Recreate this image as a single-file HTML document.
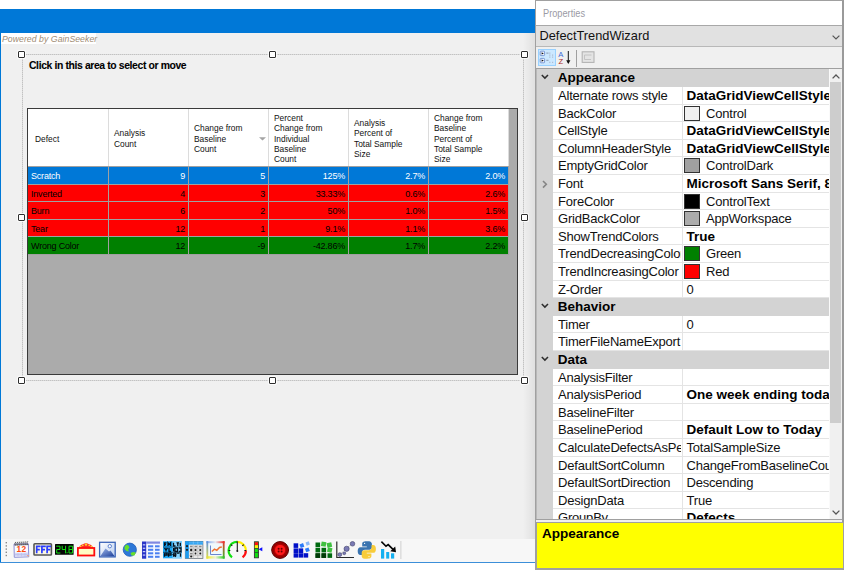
<!DOCTYPE html>
<html><head><meta charset="utf-8">
<style>
*{box-sizing:border-box;margin:0;padding:0}
html,body{width:844px;height:570px;overflow:hidden;background:#fff;font-family:"Liberation Sans",sans-serif;position:relative}
.abs{position:absolute}
#form{position:absolute;left:0;top:9px;width:536px;height:554px;background:#f0f0f0;border-left:1px solid #0078d7}
#titlebar{position:absolute;left:0;top:9px;width:536px;height:24px;background:#0078d7}
#botline{position:absolute;left:0;top:562px;width:536px;height:1px;background:#3c8fd9}
#powered{position:absolute;left:1px;top:33px;width:95px;height:11px;background:#fff;color:#a08c74;font-style:italic;font-size:8.7px;line-height:13.6px;padding-left:1px;letter-spacing:0.05px;white-space:nowrap}
.dash{position:absolute;background:transparent}
.hd{position:absolute;width:7px;height:7px;border:1.5px solid #2e2e2e;background:#fff;border-radius:1px;box-shadow:0 0 0 1px rgba(255,255,255,.8)}
#click{position:absolute;left:29px;top:60.3px;font-size:10.4px;letter-spacing:-0.38px;font-weight:bold;color:#000;white-space:nowrap;line-height:12px;-webkit-text-stroke:0.08px #000}
#grid{position:absolute;left:27px;top:108px;width:491px;height:267px;border:1px solid #3a3a3a;background:#ababab;overflow:hidden}
#hdr{position:absolute;left:0;top:0;width:481px;height:58px;background:#fff;border-bottom:1px solid #a0a0a0}
.hc{position:absolute;top:0;height:57px;border-right:1px solid #dcdcdc;display:flex;align-items:center}
.ht{font-size:8.4px;line-height:10.4px;color:#111;padding-left:6px;padding-top:2.6px;white-space:nowrap}
.dr{position:absolute;left:0;width:481px;border-bottom:1px solid #a0a0a0}
.dc{position:absolute;top:0;height:100%;border-right:1px solid #a0a0a0;font-size:9px;letter-spacing:-0.2px;line-height:16.6px;padding:1px 3px 0 3px;white-space:nowrap;overflow:hidden}
.sel{background:#0078d7;color:#fff}
.red{background:#ff0000;color:#000}
.grn{background:#008000;color:#000}
/* toolbar */
#tb{position:absolute;left:1px;top:539px;width:534px;height:23px;background:#f7f7f7}
#grip{position:absolute;left:6px;top:542px;width:2px;height:16px;background:repeating-linear-gradient(#9a9a9a 0 1px,transparent 1px 3px)}
.ic{position:absolute;top:541px;width:18px;height:18px}
/* properties panel */
#pp{position:absolute;left:535px;top:0;width:309px;height:570px;background:#f0f0f0;border:1px solid #a0a0a0;border-right:2px solid #9a9a9a}
#pptitle{position:absolute;left:536px;top:1px;width:306px;height:25px;background:#fff;border-bottom:1px solid #a8a8a8}
#pptitle span{position:absolute;left:6.7px;top:4.8px;font-size:10.6px;color:#9a9aa4;line-height:14px;transform:scaleX(0.87);transform-origin:0 0;white-space:nowrap}
#combo{position:absolute;left:536px;top:26px;width:306px;height:21px;background:#e1e1e1;border-bottom:1px solid #b8b8b8}
#combo span{position:absolute;left:3.5px;top:2px;font-size:12.8px;line-height:16px;color:#111;white-space:nowrap}
#ptb{position:absolute;left:536px;top:47px;width:306px;height:22px;background:#f0f0f0;border-bottom:1px solid #a0a0a0}
#pgrid{position:absolute;left:536px;top:69px;width:293px;height:450px;background:#d3d3d3;overflow:hidden}
.cat{position:absolute;left:0;width:293px;background:#d3d3d3}
.cat .chev{position:absolute;left:4.6px;top:5.4px;line-height:0}
.cat .ct{position:absolute;left:21.7px;top:0;font-size:13.5px;font-weight:bold;line-height:18px;color:#000;white-space:nowrap}
.pr{position:absolute;left:0;width:293px}
.pr .exp{position:absolute;left:5.6px;top:4.5px;line-height:0}
.lab{position:absolute;left:17px;top:0;width:129px;background:#fff;border-bottom:1px solid #e4e4e4;font-size:13px;letter-spacing:-0.2px;line-height:18px;padding-left:5px;color:#111;white-space:nowrap}
.lt{display:block;width:122.6px;overflow:hidden}
.val{position:absolute;left:146px;top:0;width:147px;background:#fff;border-bottom:1px solid #e4e4e4;border-left:1px solid #e4e4e4;white-space:nowrap;overflow:hidden}
.vb{position:absolute;left:3.5px;top:0;font-size:13.5px;font-weight:bold;line-height:18px;color:#000}
.vt{position:absolute;left:3.5px;top:0;font-size:13px;letter-spacing:-0.2px;line-height:18px;color:#111}
.sw{position:absolute;left:0.8px;top:1.2px;width:16px;height:14.7px;border:1px solid #333}
#vsb{position:absolute;left:829px;top:69px;width:13px;height:450px;background:#f0f0f0;border-left:1px solid #fafafa}
#thumb{position:absolute;left:830px;top:82px;width:11px;height:341px;background:#cdcdcd}
#pgbot{position:absolute;left:536px;top:519px;width:306px;height:3px;background:#f0f0f0;border-top:1px solid #a0a0a0}
#help{position:absolute;left:536px;top:522px;width:308px;height:47px;background:#ffff00;border:1px solid #a0a0a0}
#help span{position:absolute;left:5px;top:3px;font-size:13.5px;font-weight:bold;line-height:16px;color:#000}
</style></head><body>
<div id="form"></div>
<div id="titlebar"></div>
<div id="botline"></div>
<div style="position:absolute;left:523px;top:33px;width:12px;height:529px;background:linear-gradient(90deg,rgba(0,0,0,0) 0,rgba(0,0,0,0.065) 100%)"></div>
<div id="powered">Powered by GainSeeker</div>

<!-- selection rectangle -->
<div class="dash" style="left:21.5px;top:54px;width:502px;height:1px;background:repeating-linear-gradient(90deg,#c2c2c2 0 1px,#dadada 1px 2px)"></div>
<div class="dash" style="left:21.5px;top:380px;width:502px;height:1px;background:repeating-linear-gradient(90deg,#c2c2c2 0 1px,#dadada 1px 2px)"></div>
<div class="dash" style="left:21.5px;top:54px;width:1px;height:326px;background:repeating-linear-gradient(#c2c2c2 0 1px,#dadada 1px 2px)"></div>
<div class="dash" style="left:523px;top:54px;width:1px;height:326px;background:repeating-linear-gradient(#c2c2c2 0 1px,#dadada 1px 2px)"></div>

<div id="click">Click in this area to select or move</div>

<div id="grid">
<div id="hdr"><div class="hc" style="left:0px;width:81px"><div class="ht" style="padding-left:7px">Defect</div></div>
<div class="hc" style="left:81px;width:80px"><div class="ht" style="padding-left:5px">Analysis<br>Count</div></div>
<div class="hc" style="left:161px;width:80px"><div class="ht" style="padding-left:5px">Change from<br>Baseline<br>Count</div></div>
<div class="hc" style="left:241px;width:80px"><div class="ht" style="padding-left:5px">Percent<br>Change from<br>Individual<br>Baseline<br>Count</div></div>
<div class="hc" style="left:321px;width:80px"><div class="ht" style="padding-left:5px">Analysis<br>Percent of<br>Total Sample<br>Size</div></div>
<div class="hc" style="left:401px;width:80px"><div class="ht" style="padding-left:5px">Change from<br>Baseline<br>Percent of<br>Total Sample<br>Size</div></div>
<svg style="position:absolute;left:230.8px;top:28px" width="7" height="4" viewBox="0 0 7 4"><path d="M0 0.2 L7 0.2 L3.5 3.6 Z" fill="#a4a4a4"/></svg>
</div>
<div class="dr sel" style="top:58px;height:18px"><div class="dc" style="left:0px;width:81px;text-align:left">Scratch</div><div class="dc" style="left:81px;width:80px;text-align:right">9</div><div class="dc" style="left:161px;width:80px;text-align:right">5</div><div class="dc" style="left:241px;width:80px;text-align:right">125%</div><div class="dc" style="left:321px;width:80px;text-align:right">2.7%</div><div class="dc" style="left:401px;width:80px;text-align:right">2.0%</div></div>
<div class="dr red" style="top:76px;height:17px"><div class="dc" style="left:0px;width:81px;text-align:left">Inverted</div><div class="dc" style="left:81px;width:80px;text-align:right">4</div><div class="dc" style="left:161px;width:80px;text-align:right">3</div><div class="dc" style="left:241px;width:80px;text-align:right">33.33%</div><div class="dc" style="left:321px;width:80px;text-align:right">0.6%</div><div class="dc" style="left:401px;width:80px;text-align:right">2.6%</div></div>
<div class="dr red" style="top:93px;height:18px"><div class="dc" style="left:0px;width:81px;text-align:left">Burn</div><div class="dc" style="left:81px;width:80px;text-align:right">6</div><div class="dc" style="left:161px;width:80px;text-align:right">2</div><div class="dc" style="left:241px;width:80px;text-align:right">50%</div><div class="dc" style="left:321px;width:80px;text-align:right">1.0%</div><div class="dc" style="left:401px;width:80px;text-align:right">1.5%</div></div>
<div class="dr red" style="top:111px;height:17px"><div class="dc" style="left:0px;width:81px;text-align:left">Tear</div><div class="dc" style="left:81px;width:80px;text-align:right">12</div><div class="dc" style="left:161px;width:80px;text-align:right">1</div><div class="dc" style="left:241px;width:80px;text-align:right">9.1%</div><div class="dc" style="left:321px;width:80px;text-align:right">1.1%</div><div class="dc" style="left:401px;width:80px;text-align:right">3.6%</div></div>
<div class="dr grn" style="top:128px;height:18px"><div class="dc" style="left:0px;width:81px;text-align:left">Wrong Color</div><div class="dc" style="left:81px;width:80px;text-align:right">12</div><div class="dc" style="left:161px;width:80px;text-align:right">-9</div><div class="dc" style="left:241px;width:80px;text-align:right">-42.86%</div><div class="dc" style="left:321px;width:80px;text-align:right">1.7%</div><div class="dc" style="left:401px;width:80px;text-align:right">2.2%</div></div>
</div>

<div class="hd" style="left:18px;top:51px"></div>
<div class="hd" style="left:269px;top:51px"></div>
<div class="hd" style="left:520.5px;top:51px"></div>
<div class="hd" style="left:18px;top:214px"></div>
<div class="hd" style="left:520.5px;top:214px"></div>
<div class="hd" style="left:18px;top:377px"></div>
<div class="hd" style="left:269px;top:377px"></div>
<div class="hd" style="left:520.5px;top:377px"></div>

<!-- bottom toolbar -->
<div id="tb"></div>
<svg style="position:absolute;left:0;top:0" width="410" height="570" viewBox="0 0 410 570">
<defs>
 <linearGradient id="gimg" x1="0" y1="0" x2="1" y2="1"><stop offset="0" stop-color="#ffffff"/><stop offset="1" stop-color="#b8cdf0"/></linearGradient>
 <linearGradient id="gmtn" x1="0" y1="0" x2="1" y2="1"><stop offset="0" stop-color="#9fb8ea"/><stop offset="1" stop-color="#1d3f99"/></linearGradient>
 <linearGradient id="gchart" x1="0" y1="0" x2="1" y2="1"><stop offset="0" stop-color="#5a8ee0"/><stop offset="0.45" stop-color="#f05050"/><stop offset="0.55" stop-color="#e8e040"/><stop offset="1" stop-color="#40c040"/></linearGradient>
</defs>
<!-- grip -->
<g fill="#8a8a8a"><rect x="5.6" y="542" width="1.4" height="1.4"/><rect x="5.6" y="545.2" width="1.4" height="1.4"/><rect x="5.6" y="548.4" width="1.4" height="1.4"/><rect x="5.6" y="551.6" width="1.4" height="1.4"/><rect x="5.6" y="554.8" width="1.4" height="1.4"/></g>
<!-- calendar -->
<path d="M14 544.2 L28.3 543.8 L28.8 556.8 L14.3 557.3 Z" fill="#fbfbff" stroke="#8c8ed6" stroke-width="1"/>
<path d="M14.8 552.8 L28 552.5 L28.3 556.3 L15 556.6 Z" fill="#d4d6f4"/>
<path d="M15 554.5 H28 M18 553 V556.5 M21.5 553 V556.5 M25 553 V556.5" stroke="#b8bce8" stroke-width="0.6"/>
<path d="M26.6 555 L28.6 555 L28.6 557 Z" fill="#f0a070"/>
<g stroke="#3a3a3a" stroke-width="0.8" fill="none">
<path d="M15.3 545.5 q-0.9 -2.6 0.5 -3.6 M17.3 545.4 q-0.9 -2.6 0.5 -3.6 M19.3 545.3 q-0.9 -2.6 0.5 -3.6 M21.3 545.2 q-0.9 -2.6 0.5 -3.6 M23.3 545.1 q-0.9 -2.6 0.5 -3.6 M25.3 545 q-0.9 -2.6 0.5 -3.6 M27.3 544.9 q-0.9 -2.6 0.5 -3.6"/>
</g>
<path d="M14.5 545 L28.3 544.6" stroke="#555" stroke-width="0.8"/>
<text x="16.6" y="552.4" font-family="Liberation Sans" font-weight="bold" font-size="8.4" fill="#ff4a10" letter-spacing="0.2">12</text>
<!-- FFF -->
<rect x="34" y="543.7" width="17.4" height="11.3" rx="0.8" fill="#fbf8e0" stroke="#555" stroke-width="1.6"/>
<g stroke="#2a3cff" stroke-width="1.7" fill="none"><path d="M36.7 553.3 V546.3 H40.6 M36.7 549.6 H39.8"/><path d="M41.9 553.3 V546.3 H45.8 M41.9 549.6 H45"/><path d="M47.1 553.3 V546.3 H51 M47.1 549.6 H50.2"/></g>
<!-- 24.8 -->
<rect x="55" y="544" width="18.6" height="10.7" rx="0.5" fill="#050505"/>
<g fill="none" stroke="#12e012" stroke-width="1" stroke-linecap="butt">
<path d="M56.2 546.2 H60 V549.5 H56.7 V553 H60.4"/>
<path d="M62.2 545.8 V549.5 H65.6 M65.6 545.8 V553.3"/>
<path d="M69 546.2 H72.6 V553 H69 Z M69 549.5 H72.6"/>
</g>
<rect x="66.6" y="552.2" width="1" height="1" fill="#12e012"/>
<!-- marquee -->
<path d="M78.5 547.8 Q80.5 544.5 84 543.8 Q86 542.4 88 543.8 Q91.5 544.5 93.5 547.8 Z" fill="#ff2a2a"/>
<g fill="#ffd030"><circle cx="80.6" cy="546.5" r="0.9"/><circle cx="82.8" cy="545.3" r="0.9"/><circle cx="86" cy="544.5" r="1.2"/><circle cx="89.2" cy="545.3" r="0.9"/><circle cx="91.4" cy="546.5" r="0.9"/></g>
<rect x="77.9" y="548" width="16.4" height="7.5" fill="#fffcc4" stroke="#ff0c0c" stroke-width="1.8"/>
<!-- image -->
<rect x="99.6" y="542.3" width="15.6" height="14.6" fill="url(#gimg)" stroke="#3a63b8" stroke-width="1.3"/>
<path d="M100.3 556.3 L105.5 548.5 L109 551.5 L110.5 550.5 L114.6 556.3 Z" fill="url(#gmtn)"/>
<circle cx="109.8" cy="546.2" r="1.7" fill="#fff" stroke="#5a80d0" stroke-width="1"/>
<!-- globe -->
<circle cx="129.8" cy="549.7" r="6.6" fill="#2d78d8" stroke="#1e5cb8" stroke-width="0.8"/>
<path d="M124.6 546.5 L126.5 544.5 L128.5 545.5 L129.5 547.5 L128 549.5 L129 551.5 L126.5 551 L124.5 549 Z" fill="#66e02a"/>
<path d="M130.5 553 L133 552 L135.8 552.5 L134.5 555.5 L131.5 555.5 Z" fill="#66e02a"/>
<!-- table -->
<rect x="142" y="541.5" width="18" height="17.2" fill="#f4f7ff"/>
<rect x="142" y="541.5" width="4.2" height="17.2" fill="#2a35c8"/>
<rect x="146.2" y="541.5" width="13.8" height="2.2" fill="#8088e0"/>
<g fill="#d8dcff"><rect x="142.8" y="544.3" width="2.5" height="1.1"/><rect x="142.8" y="547.7" width="2.5" height="1.1"/><rect x="142.8" y="551.1" width="2.5" height="1.1"/><rect x="142.8" y="554.5" width="2.5" height="1.1"/></g>
<g fill="#4a7ff0"><rect x="148" y="545.3" width="5.2" height="2"/><rect x="155" y="545.3" width="4.6" height="2"/><rect x="148" y="548.8" width="5.2" height="2"/><rect x="155" y="548.8" width="4.6" height="2"/><rect x="148" y="552.3" width="5.2" height="2"/><rect x="155" y="552.3" width="4.6" height="2"/><rect x="148" y="555.8" width="5.2" height="2"/><rect x="155" y="555.8" width="4.6" height="2"/></g>
<!-- cyan grid -->
<rect x="163" y="541.3" width="18.8" height="17" fill="#18a8f8"/>
<rect x="172.5" y="541.3" width="9.3" height="17" fill="#88d4ff"/>
<g stroke="#05101a" stroke-width="1.3" fill="none">
<path d="M164.5 546 V542.8 H166.5 M164.5 544.5 H166 M168 546 V542.8 L169.3 544.5 L170.6 542.8 V546"/>
<path d="M173.5 542.8 V546 H175.5 M176.5 542.8 H179 M177.8 542.8 V546 M180.3 542.8 V546"/>
<path d="M164.5 548 L166 550 L167.5 548 M166 550 V551.5 M169 548 V551.5 H171"/>
<path d="M173.6 548 V551.5 M175 548 H177.5 V551.5 H175 Z M178.8 548 H181 V551.5 H178.8"/>
<path d="M164.5 553.2 V556.8 M164.5 553.2 H167 V555 H164.5 M168.5 553.2 V556.8 M168.5 553.2 H171 V555 H168.5"/>
<path d="M173.6 553.2 V556.8 M173.6 553.2 H175.8 V555 H173.6 L176 556.8 M177 553.2 H179.5 M180.5 553.2 V556.8"/>
</g>
<path d="M163 547 H181.8 M163 552.3 H181.8" stroke="#08304a" stroke-width="0.7"/>
<!-- grid blue header -->
<rect x="185.3" y="541.4" width="17.6" height="17" fill="#e8e8e8" stroke="#707880" stroke-width="0.8"/>
<rect x="185.3" y="541.4" width="17.6" height="3.2" fill="#1d9cf0"/>
<rect x="185.3" y="541.4" width="3.6" height="17" fill="#1d9cf0"/>
<path d="M189 542.9 H203 M193.3 541.4 V544.6 M197.8 541.4 V544.6" stroke="#8ccaf8" stroke-width="0.6"/>
<path d="M189 548.2 H203 M189 551.8 H203 M189 555.3 H203 M193.3 544.6 V558.4 M197.8 544.6 V558.4" stroke="#b0b0b0" stroke-width="0.6"/>
<g fill="#1a1a1a"><circle cx="187" cy="546.2" r="1.1"/><circle cx="187" cy="549.8" r="1.1"/><circle cx="191.2" cy="550" r="1.2"/><circle cx="195.5" cy="550" r="1.1"/><circle cx="200.3" cy="550" r="1.1"/><circle cx="191.2" cy="556.5" r="1.1"/><circle cx="195.5" cy="553.5" r="0.9"/><circle cx="200.3" cy="553.5" r="1"/></g>
<g fill="#8a8a8a"><rect x="190" y="545.7" width="2.6" height="1.5"/><rect x="194.5" y="545.7" width="2.6" height="1.5"/><rect x="199" y="545.7" width="2.6" height="1.5"/><rect x="190" y="553" width="2.6" height="1.4"/></g>
<!-- chart -->
<rect x="206.8" y="541.6" width="17.4" height="16.4" fill="#f0f8fc"/>
<defs>
<linearGradient id="gct" x1="0" x2="1"><stop offset="0" stop-color="#7aa8f0"/><stop offset="0.5" stop-color="#e8e8f0"/><stop offset="1" stop-color="#f02020"/></linearGradient>
<linearGradient id="gcb" x1="0" x2="1"><stop offset="0" stop-color="#f0f020"/><stop offset="0.5" stop-color="#f0f0d0"/><stop offset="1" stop-color="#20d020"/></linearGradient>
<linearGradient id="gcl" x1="0" x2="0" y1="0" y2="1"><stop offset="0" stop-color="#5a8ee0"/><stop offset="1" stop-color="#e8e040"/></linearGradient>
<linearGradient id="gcr" x1="0" x2="0" y1="0" y2="1"><stop offset="0" stop-color="#f03030"/><stop offset="1" stop-color="#30c030"/></linearGradient>
</defs>
<rect x="206.4" y="541.2" width="18.2" height="2" fill="url(#gct)"/>
<rect x="206.4" y="556.2" width="18.2" height="2.4" fill="url(#gcb)"/>
<rect x="206.4" y="541.2" width="1.8" height="17.4" fill="url(#gcl)"/>
<rect x="222.8" y="541.2" width="1.8" height="17.4" fill="url(#gcr)"/>
<path d="M210.5 545.5 V554.5 H221.5" fill="none" stroke="#5a78c8" stroke-width="0.9"/>
<path d="M211.8 551.5 L214.5 549.2 L216.8 550.3 L219.5 547.5 L221.8 547" fill="none" stroke="#f07030" stroke-width="1.4"/>
<!-- gauge -->
<path d="M232 557.3 A8.6 8.6 0 0 1 237.3 541.9" fill="none" stroke="#10e010" stroke-width="2.2"/>
<path d="M237.3 541.9 A8.6 8.6 0 0 1 245.9 550.5" fill="none" stroke="#ffee00" stroke-width="2.2"/>
<path d="M245.9 550.5 A8.6 8.6 0 0 1 242.6 557.3" fill="none" stroke="#ff1010" stroke-width="2.2"/>
<g stroke="#1a1a1a" stroke-width="1.1"><path d="M237.3 541.2 V551"/><path d="M230.8 544.6 l1.5 1.3 M228.5 550.5 h1.8 M243.8 544.6 l-1.5 1.3 M244.4 550.5 h1.8"/></g>
<circle cx="237.3" cy="551" r="1" fill="#1a1a1a"/>
<!-- level -->
<rect x="254.4" y="541.8" width="4" height="16" fill="#10e010" stroke="#333" stroke-width="0.9"/>
<rect x="254.8" y="542.2" width="3.2" height="3" fill="#ff1010"/>
<rect x="254.8" y="545.2" width="3.2" height="3" fill="#ffee00"/>
<path d="M254.5 548.5 h4 M254.5 552.5 h4" stroke="#333" stroke-width="0.7"/>
<path d="M258.5 549.2 L262.3 547.3 L262.3 551.2 Z" fill="#1010ff"/>
<!-- red button -->
<circle cx="280.1" cy="550" r="8.4" fill="#b00000" stroke="#500000" stroke-width="1"/>
<circle cx="280.1" cy="550" r="7" fill="none" stroke="#700000" stroke-width="0.6"/>
<circle cx="280.1" cy="550" r="5.6" fill="#ff1a1a" stroke="#a00000" stroke-width="0.7"/>
<g fill="#6a0000"><circle cx="278.6" cy="548.7" r="1"/><circle cx="281.6" cy="548.7" r="1"/><circle cx="278.6" cy="551.5" r="1"/><circle cx="281.6" cy="551.5" r="1"/></g>
<!-- blue blocks -->
<g fill="#0010c8"><rect x="293.6" y="543.3" width="4.6" height="4.6"/><rect x="293.6" y="548.4" width="4.6" height="4.6"/><rect x="293.6" y="553.2" width="4.6" height="4.4"/><rect x="298.6" y="548.4" width="4.6" height="4.6"/><rect x="298.6" y="553.2" width="4.6" height="4.4"/><rect x="303.6" y="553.2" width="4.6" height="4.4"/></g>
<g fill="#2a7af8"><rect x="300" y="543.6" width="3.8" height="3.8" transform="rotate(-20 302 545.5)"/><rect x="305.5" y="548" width="3.8" height="3.8" transform="rotate(-20 307.4 550)"/></g>
<rect x="306" y="541.8" width="3.4" height="3.4" fill="#8ab8f8" transform="rotate(-20 307.7 543.5)"/>
<!-- green blocks -->
<g fill="#006a10"><rect x="315.5" y="542.5" width="4.6" height="4.6"/><rect x="315.5" y="547.8" width="4.6" height="4.6"/><rect x="315.5" y="553.3" width="4.6" height="4.6"/><rect x="321.5" y="547.8" width="4.6" height="4.6"/><rect x="321.5" y="553.3" width="4.6" height="4.6"/><rect x="327.5" y="553.3" width="4.6" height="4.6"/></g>
<g fill="#003a08"><rect x="315.5" y="553.3" width="4.6" height="4.6"/><rect x="321.5" y="553.3" width="4.6" height="4.6"/></g>
<g fill="#40c040"><rect x="321.3" y="541.8" width="4.8" height="4.6" transform="rotate(10 323.5 544)"/><rect x="327" y="542.6" width="4.8" height="4.6" transform="rotate(-12 329.4 545)"/><rect x="327.4" y="547.6" width="4.6" height="4.6" transform="rotate(12 329.6 550)"/></g>
<!-- scatter -->
<path d="M336.8 541.4 V557.5 H354" fill="none" stroke="#2a2a2a" stroke-width="1.2"/>
<path d="M339.5 555 L352 543.5" stroke="#444" stroke-width="0.6" stroke-dasharray="1 1"/>
<g fill="#7a7ab4" stroke="#40406a" stroke-width="0.6"><circle cx="339.8" cy="554.6" r="1.9"/><circle cx="344.3" cy="553.3" r="1.4"/><circle cx="346.6" cy="548.8" r="2.6"/><circle cx="352.5" cy="543.8" r="2.3"/></g>
<!-- python -->
<path d="M366.6 541.3 c-3.8 0 -4.4 1.3 -4.4 2.9 v2.2 h4.6 v0.8 h-6.3 c-1.8 0 -2.8 1.3 -2.8 3.9 c0 2.6 1 4 2.7 4 h1.6 v-2.4 c0 -1.7 1.4 -3 3 -3 h4.4 c1.4 0 2.5 -1.1 2.5 -2.5 v-3.1 c0 -1.5 -1.2 -2.6 -2.8 -2.8 z" fill="#3a74b0"/>
<path d="M367 558.7 c3.8 0 4.4 -1.3 4.4 -2.9 v-2.2 h-4.6 v-0.8 h6.3 c1.8 0 2.8 -1.3 2.8 -3.9 c0 -2.6 -1 -4 -2.7 -4 h-1.6 v2.4 c0 1.7 -1.4 3 -3 3 h-4.4 c-1.4 0 -2.5 1.1 -2.5 2.5 v3.1 c0 1.5 1.2 2.6 2.8 2.8 z" fill="#f8cc3a"/>
<circle cx="364.6" cy="543.4" r="0.6" fill="#fff"/><circle cx="369" cy="556.6" r="0.6" fill="#fff"/>
<!-- trend down -->
<g fill="#14b0f0"><rect x="381" y="549" width="3.2" height="9.6"/><rect x="386.2" y="552" width="3" height="6.6"/><rect x="391" y="553.3" width="3.2" height="5.3"/></g>
<path d="M381.4 541.6 L386 546.2 L388.2 544.6 L393 549.4" fill="none" stroke="#050505" stroke-width="1.6"/>
<path d="M390.3 551.3 L396 552.2 L395.2 546.5 Z" fill="#050505"/>
<!-- separator -->
<rect x="400.5" y="541" width="0.8" height="18" fill="#c8c8c8"/>
</svg>


<!-- properties panel -->
<div id="pp"></div>
<div id="pptitle"><span>Properties</span></div>
<div id="combo"><span>DefectTrendWizard</span>
<svg style="position:absolute;left:296px;top:8.5px" width="8" height="5" viewBox="0 0 8 5"><path d="M0.6 0.6 L4 4 L7.4 0.6" fill="none" stroke="#555" stroke-width="1.2"/></svg>
</div>
<div id="ptb">
 <div style="position:absolute;left:2px;top:2px;width:18px;height:17px;background:#cce8ff;border:1px solid #99d1ff"></div>
 <svg style="position:absolute;left:0;top:0" width="70" height="21" viewBox="536 47 70 21">
  <g stroke="#6f8fcf" stroke-width="0.9" fill="#eef4ff"><rect x="540.2" y="51.2" width="4.4" height="4.4" rx="0.8"/><rect x="540.2" y="58.4" width="4.4" height="4.4" rx="0.8"/></g>
  <g fill="#111"><path d="M541.6 52.2 L543.8 53.4 L541.6 54.6 Z"/><path d="M541.6 59.4 L543.8 60.6 L541.6 61.8 Z"/></g>
  <g fill="#8a98b0"><rect x="546.3" y="52.6" width="2.2" height="1"/><rect x="546.3" y="59.8" width="2.2" height="1"/></g>
  <g fill="#a8b4c8"><rect x="549.2" y="52.6" width="1.2" height="1"/><rect x="549.2" y="54.6" width="1.2" height="1"/><rect x="549.2" y="56.6" width="1.2" height="1"/><rect x="552" y="54.6" width="1.2" height="1"/><rect x="552" y="56.6" width="1.2" height="1"/><rect x="549.2" y="61.8" width="1.2" height="1"/><rect x="552" y="61.8" width="1.2" height="1"/></g>
  <text x="558.2" y="57" font-family="Liberation Sans" font-size="7.6" fill="#3a6ad8">A</text>
  <text x="558.4" y="63.8" font-family="Liberation Sans" font-size="7.6" fill="#a82828">Z</text>
  <path d="M568.3 51 V63" stroke="#111" stroke-width="1"/>
  <path d="M566.2 60.3 L568.3 64 L570.4 60.3 Z" fill="#111"/>
  <rect x="582.2" y="51.8" width="11.8" height="10.6" fill="#e4e4e4" stroke="#b4b4b4" stroke-width="1.1"/>
  <path d="M584.5 55 h7 M584.5 55 v4.5 h6.5" fill="none" stroke="#c0c0c0" stroke-width="0.9"/>
 </svg>
 <div style="position:absolute;left:40px;top:2.5px;width:1px;height:17px;background:#a0a0a0"></div>
</div>
<div id="pgrid">
<div class="cat" style="top:0px;height:18px"><span class="chev"><svg width="8" height="6" viewBox="0 0 8 6"><path d="M0.8 1 L3.9 4.1 L7 1" fill="none" stroke="#2e2e2e" stroke-width="1.5"/></svg></span><span class="ct">Appearance</span></div>
<div class="pr" style="top:18px;height:18px"><div class="lab" style="height:18px"><span class="lt">Alternate rows style</span></div><div class="val" style="height:18px"><span class="vb">DataGridViewCellStyle</span></div></div>
<div class="pr" style="top:36px;height:17px"><div class="lab" style="height:17px"><span class="lt">BackColor</span></div><div class="val" style="height:17px"><span class="sw" style="background:#f0f0f0"></span><span class="vt" style="left:23px">Control</span></div></div>
<div class="pr" style="top:53px;height:18px"><div class="lab" style="height:18px"><span class="lt">CellStyle</span></div><div class="val" style="height:18px"><span class="vb">DataGridViewCellStyle</span></div></div>
<div class="pr" style="top:71px;height:17px"><div class="lab" style="height:17px"><span class="lt">ColumnHeaderStyle</span></div><div class="val" style="height:17px"><span class="vb">DataGridViewCellStyle</span></div></div>
<div class="pr" style="top:88px;height:18px"><div class="lab" style="height:18px"><span class="lt">EmptyGridColor</span></div><div class="val" style="height:18px"><span class="sw" style="background:#a0a0a0"></span><span class="vt" style="left:23px">ControlDark</span></div></div>
<div class="pr" style="top:106px;height:18px"><span class="exp"><svg width="6" height="9" viewBox="0 0 6 9"><path d="M1 1 L4.3 4.3 L1 7.6" fill="none" stroke="#858585" stroke-width="1.6"/></svg></span><div class="lab" style="height:18px"><span class="lt">Font</span></div><div class="val" style="height:18px"><span class="vb">Microsoft Sans Serif, 8.25pt</span></div></div>
<div class="pr" style="top:124px;height:17px"><div class="lab" style="height:17px"><span class="lt">ForeColor</span></div><div class="val" style="height:17px"><span class="sw" style="background:#000000"></span><span class="vt" style="left:23px">ControlText</span></div></div>
<div class="pr" style="top:141px;height:18px"><div class="lab" style="height:18px"><span class="lt">GridBackColor</span></div><div class="val" style="height:18px"><span class="sw" style="background:#ababab"></span><span class="vt" style="left:23px">AppWorkspace</span></div></div>
<div class="pr" style="top:159px;height:17px"><div class="lab" style="height:17px"><span class="lt">ShowTrendColors</span></div><div class="val" style="height:17px"><span class="vb">True</span></div></div>
<div class="pr" style="top:176px;height:18px"><div class="lab" style="height:18px"><span class="lt">TrendDecreasingColor</span></div><div class="val" style="height:18px"><span class="sw" style="background:#008000"></span><span class="vt" style="left:23px">Green</span></div></div>
<div class="pr" style="top:194px;height:18px"><div class="lab" style="height:18px"><span class="lt">TrendIncreasingColor</span></div><div class="val" style="height:18px"><span class="sw" style="background:#ff0000"></span><span class="vt" style="left:23px">Red</span></div></div>
<div class="pr" style="top:212px;height:17px"><div class="lab" style="height:17px"><span class="lt">Z-Order</span></div><div class="val" style="height:17px"><span class="vt">0</span></div></div>
<div class="cat" style="top:229px;height:18px"><span class="chev"><svg width="8" height="6" viewBox="0 0 8 6"><path d="M0.8 1 L3.9 4.1 L7 1" fill="none" stroke="#2e2e2e" stroke-width="1.5"/></svg></span><span class="ct">Behavior</span></div>
<div class="pr" style="top:247px;height:17px"><div class="lab" style="height:17px"><span class="lt">Timer</span></div><div class="val" style="height:17px"><span class="vt">0</span></div></div>
<div class="pr" style="top:264px;height:18px"><div class="lab" style="height:18px"><span class="lt">TimerFileNameExport</span></div><div class="val" style="height:18px"><span class="vt"></span></div></div>
<div class="cat" style="top:282px;height:18px"><span class="chev"><svg width="8" height="6" viewBox="0 0 8 6"><path d="M0.8 1 L3.9 4.1 L7 1" fill="none" stroke="#2e2e2e" stroke-width="1.5"/></svg></span><span class="ct">Data</span></div>
<div class="pr" style="top:300px;height:17px"><div class="lab" style="height:17px"><span class="lt">AnalysisFilter</span></div><div class="val" style="height:17px"><span class="vt"></span></div></div>
<div class="pr" style="top:317px;height:18px"><div class="lab" style="height:18px"><span class="lt">AnalysisPeriod</span></div><div class="val" style="height:18px"><span class="vb">One week ending today</span></div></div>
<div class="pr" style="top:335px;height:17px"><div class="lab" style="height:17px"><span class="lt">BaselineFilter</span></div><div class="val" style="height:17px"><span class="vt"></span></div></div>
<div class="pr" style="top:352px;height:18px"><div class="lab" style="height:18px"><span class="lt">BaselinePeriod</span></div><div class="val" style="height:18px"><span class="vb">Default Low to Today</span></div></div>
<div class="pr" style="top:370px;height:18px"><div class="lab" style="height:18px"><span class="lt">CalculateDefectsAsPercentOf</span></div><div class="val" style="height:18px"><span class="vt">TotalSampleSize</span></div></div>
<div class="pr" style="top:388px;height:17px"><div class="lab" style="height:17px"><span class="lt">DefaultSortColumn</span></div><div class="val" style="height:17px"><span class="vt">ChangeFromBaselineCount</span></div></div>
<div class="pr" style="top:405px;height:18px"><div class="lab" style="height:18px"><span class="lt">DefaultSortDirection</span></div><div class="val" style="height:18px"><span class="vt">Descending</span></div></div>
<div class="pr" style="top:423px;height:17px"><div class="lab" style="height:17px"><span class="lt">DesignData</span></div><div class="val" style="height:17px"><span class="vt">True</span></div></div>
<div class="pr" style="top:440px;height:18px"><div class="lab" style="height:18px"><span class="lt">GroupBy</span></div><div class="val" style="height:18px"><span class="vb">Defects</span></div></div>
</div>
<div id="vsb"></div>
<div style="position:absolute;left:536px;top:69px;width:1px;height:450px;background:#b8b8b8"></div>
<div id="thumb"></div>
<svg style="position:absolute;left:832px;top:73.5px" width="8" height="5" viewBox="0 0 8 5"><path d="M0.6 4.4 L4 1 L7.4 4.4" fill="none" stroke="#555" stroke-width="1.3"/></svg>
<svg style="position:absolute;left:832px;top:510px" width="8" height="5" viewBox="0 0 8 5"><path d="M0.6 0.6 L4 4 L7.4 0.6" fill="none" stroke="#555" stroke-width="1.3"/></svg>
<div id="pgbot"></div>
<div id="help"><span>Appearance</span></div>
</body></html>
